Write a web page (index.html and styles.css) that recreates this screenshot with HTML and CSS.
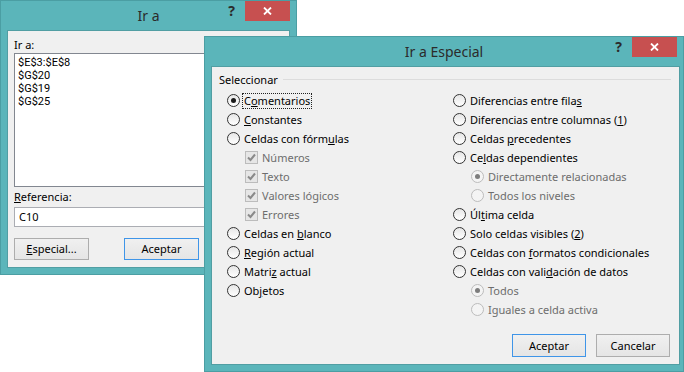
FILE: index.html
```html
<!DOCTYPE html>
<html lang="es">
<head>
<meta charset="utf-8">
<title>Ir a Especial</title>
<link rel="stylesheet" href="styles.css">
</head>
<body>
<main class="desktop">
  <section class="win win-goto">
    <header class="titlebar">
      <span></span>
      <span class="title">Ir a</span>
      <div class="controls">
        <span class="help">?</span>
        <span class="close"><svg width="9" height="8" viewBox="0 0 9 8"><path d="M1 0.5 L8 7.5 M8 0.5 L1 7.5" stroke="#fff" stroke-width="1.8" fill="none"/></svg></span>
      </div>
    </header>
    <div class="client">
      <div class="lbl first">Ir a:</div>
      <div class="listbox">
        <div class="item">$E$3:$E$8</div>
        <div class="item">$G$20</div>
        <div class="item">$G$19</div>
        <div class="item">$G$25</div>
      </div>
      <div class="lbl ref"><u>R</u>eferencia:</div>
      <div class="textbox">C10</div>
      <div class="btnrow">
        <button class="btn"><u>E</u>special...</button>
        <button class="btn default">Aceptar</button>
      </div>
    </div>
  </section>

  <section class="win win-special">
    <header class="titlebar">
      <span></span>
      <span class="title">Ir a Especial</span>
      <div class="controls">
        <span class="help">?</span>
        <span class="close"><svg width="9" height="8" viewBox="0 0 9 8"><path d="M1 0.5 L8 7.5 M8 0.5 L1 7.5" stroke="#fff" stroke-width="1.8" fill="none"/></svg></span>
      </div>
    </header>
    <div class="client">
      <div class="grp-head"><span>Seleccionar</span><span class="rule"></span></div>
      <div class="options">
        <div class="col">
          <div class="opt"><span class="radio on"></span><span class="focus">C<u>o</u>mentarios</span></div>
          <div class="opt"><span class="radio"></span><span><u>C</u>onstantes</span></div>
          <div class="opt"><span class="radio"></span><span>Celdas con fórm<u>u</u>las</span></div>
          <div class="opt sub dis"><span class="check"><svg width="11" height="11" viewBox="0 0 11 11"><path d="M2 5.5 L4.5 8 L9 2.5" stroke="#8a8a8a" stroke-width="2" fill="none"/></svg></span><span>Números</span></div>
          <div class="opt sub dis"><span class="check"><svg width="11" height="11" viewBox="0 0 11 11"><path d="M2 5.5 L4.5 8 L9 2.5" stroke="#8a8a8a" stroke-width="2" fill="none"/></svg></span><span>Texto</span></div>
          <div class="opt sub dis"><span class="check"><svg width="11" height="11" viewBox="0 0 11 11"><path d="M2 5.5 L4.5 8 L9 2.5" stroke="#8a8a8a" stroke-width="2" fill="none"/></svg></span><span>Valores lógicos</span></div>
          <div class="opt sub dis"><span class="check"><svg width="11" height="11" viewBox="0 0 11 11"><path d="M2 5.5 L4.5 8 L9 2.5" stroke="#8a8a8a" stroke-width="2" fill="none"/></svg></span><span>Errores</span></div>
          <div class="opt"><span class="radio"></span><span>Celdas en <u>b</u>lanco</span></div>
          <div class="opt"><span class="radio"></span><span><u>R</u>egión actual</span></div>
          <div class="opt"><span class="radio"></span><span>Matri<u>z</u> actual</span></div>
          <div class="opt"><span class="radio"></span><span>Ob<u>j</u>etos</span></div>
        </div>
        <div class="col">
          <div class="opt"><span class="radio"></span><span>Diferencias entre fila<u>s</u></span></div>
          <div class="opt"><span class="radio"></span><span>Diferencias entre columnas (<u>1</u>)</span></div>
          <div class="opt"><span class="radio"></span><span>Celdas <u>p</u>recedentes</span></div>
          <div class="opt"><span class="radio"></span><span>Ce<u>l</u>das dependientes</span></div>
          <div class="opt sub dis"><span class="radio on"></span><span>Directamente relacionadas</span></div>
          <div class="opt sub dis"><span class="radio"></span><span>Todos los niveles</span></div>
          <div class="opt"><span class="radio"></span><span>Úl<u>t</u>ima celda</span></div>
          <div class="opt"><span class="radio"></span><span>Solo celdas visibles (<u>2</u>)</span></div>
          <div class="opt"><span class="radio"></span><span>Celdas con <u>f</u>ormatos condicionales</span></div>
          <div class="opt"><span class="radio"></span><span>Celdas con vali<u>d</u>ación de datos</span></div>
          <div class="opt sub dis"><span class="radio on"></span><span>Todos</span></div>
          <div class="opt sub dis"><span class="radio"></span><span>Iguales a celda activa</span></div>
        </div>
      </div>
      <div class="btnrow">
        <button class="btn default">Aceptar</button>
        <button class="btn">Cancelar</button>
      </div>
    </div>
  </section>
</main>
</body>
</html>
```
FILE: styles.css
```css
* { box-sizing: border-box; }
html, body { margin: 0; padding: 0; }
body {
  background: #fff;
  font-family: "Noto Sans", "Open Sans", "DejaVu Sans", sans-serif;
  font-size: 11px;
  color: #000;
}
.desktop { position: relative; width: 684px; height: 372px; overflow: hidden; }

.win {
  position: absolute;
  display: flex;
  flex-direction: column;
  background: #5bb5ba;
  border: 1px solid #4b9ea3;
}
.win-goto { left: 0; top: 0; width: 297px; height: 275px; }
.win-special { left: 204px; top: 36px; width: 480px; height: 336px; }

.titlebar {
  flex: none;
  height: 29px;
  display: grid;
  grid-template-columns: 1fr auto 1fr;
}
.title { font-size: 14px; line-height: 29px; color: #2b2b2b; white-space: nowrap; }
.controls { justify-self: end; display: flex; align-items: flex-start; margin-right: 6px; }
.help { font-size: 14px; font-weight: 700; line-height: 20px; color: #2b2b2b; margin-right: 10px; }
.close {
  width: 45px; height: 20px;
  background: #c75050;
  display: flex; align-items: center; justify-content: center;
}

.client {
  flex: 1;
  display: flex;
  flex-direction: column;
  background: #f0f0f0;
  border: 1px solid #519ea3;
}
.win-goto .client { margin: 0 6px 6px; padding: 6px 6px 0; }
.win-special .client { margin: 0 3px 6px 6px; }

.lbl { line-height: 15px; }
.lbl.first { margin-bottom: 1px; }
.listbox {
  flex: none;
  height: 134px;
  background: #fff;
  border: 1px solid #828790;
  padding: 2px 3px;
  margin-bottom: 2px;
}
.item {
  font-family: Roboto, "Noto Sans", sans-serif;
  font-size: 11px;
  line-height: 13px;
  height: 13px;
  white-space: nowrap;
}
.lbl.ref { margin-bottom: 3px; }
.textbox {
  height: 20px;
  background: #fff;
  border: 1px solid #abadb3;
  padding: 0 4px;
  line-height: 18px;
}

.btn {
  width: 74px;
  height: 23px;
  padding: 0;
  border: 1px solid #adadad;
  background: linear-gradient(#f0f0f0, #e5e5e5);
  font: inherit;
  color: #000;
  line-height: 20px;
}
.btn.default { border-color: #3f95e8; }
.win-goto .btn { width: 75px; height: 22px; }
.win-goto .btnrow { margin-top: 11px; display: flex; gap: 35px; }

.grp-head {
  display: flex;
  align-items: center;
  gap: 5px;
  padding: 5px 8px 0 7px;
  line-height: 15px;
}
.rule { flex: 1; height: 1px; background: #dcdcdc; }

.options {
  margin-top: 4px;
  padding-left: 15px;
  display: grid;
  grid-template-columns: 226px 1fr;
}
.col { display: flex; flex-direction: column; }
.opt { display: flex; align-items: center; gap: 4px; height: 19px; white-space: nowrap; }
.opt.sub { padding-left: 18px; }
.opt.dis { color: #6d6d6d; }

.radio {
  flex: none;
  position: relative;
  width: 13px; height: 13px;
  border-radius: 50%;
  border: 1px solid #333;
  background: linear-gradient(#e6e6e6, #fff);
}
.radio.on::after {
  content: "";
  position: absolute;
  inset: 3px;
  border-radius: 50%;
  background: #1a1a1a;
}
.dis .radio { border-color: #bcbcbc; background: #f4f4f4; }
.dis .radio.on::after { background: #7d7d7d; }

.check {
  flex: none;
  width: 13px; height: 13px;
  border: 1px solid #bcbcbc;
  background: #e6e6e6;
  display: flex; align-items: center; justify-content: center;
}
.check svg { display: block; }

.focus {
  border: 1px dotted #222;
  line-height: 14px;
  padding: 0 1px;
  margin-left: -2px;
}

.win-special .btnrow {
  margin-top: auto;
  display: flex;
  justify-content: flex-end;
  gap: 10px;
  padding: 0 9px 7px 0;
}
```
